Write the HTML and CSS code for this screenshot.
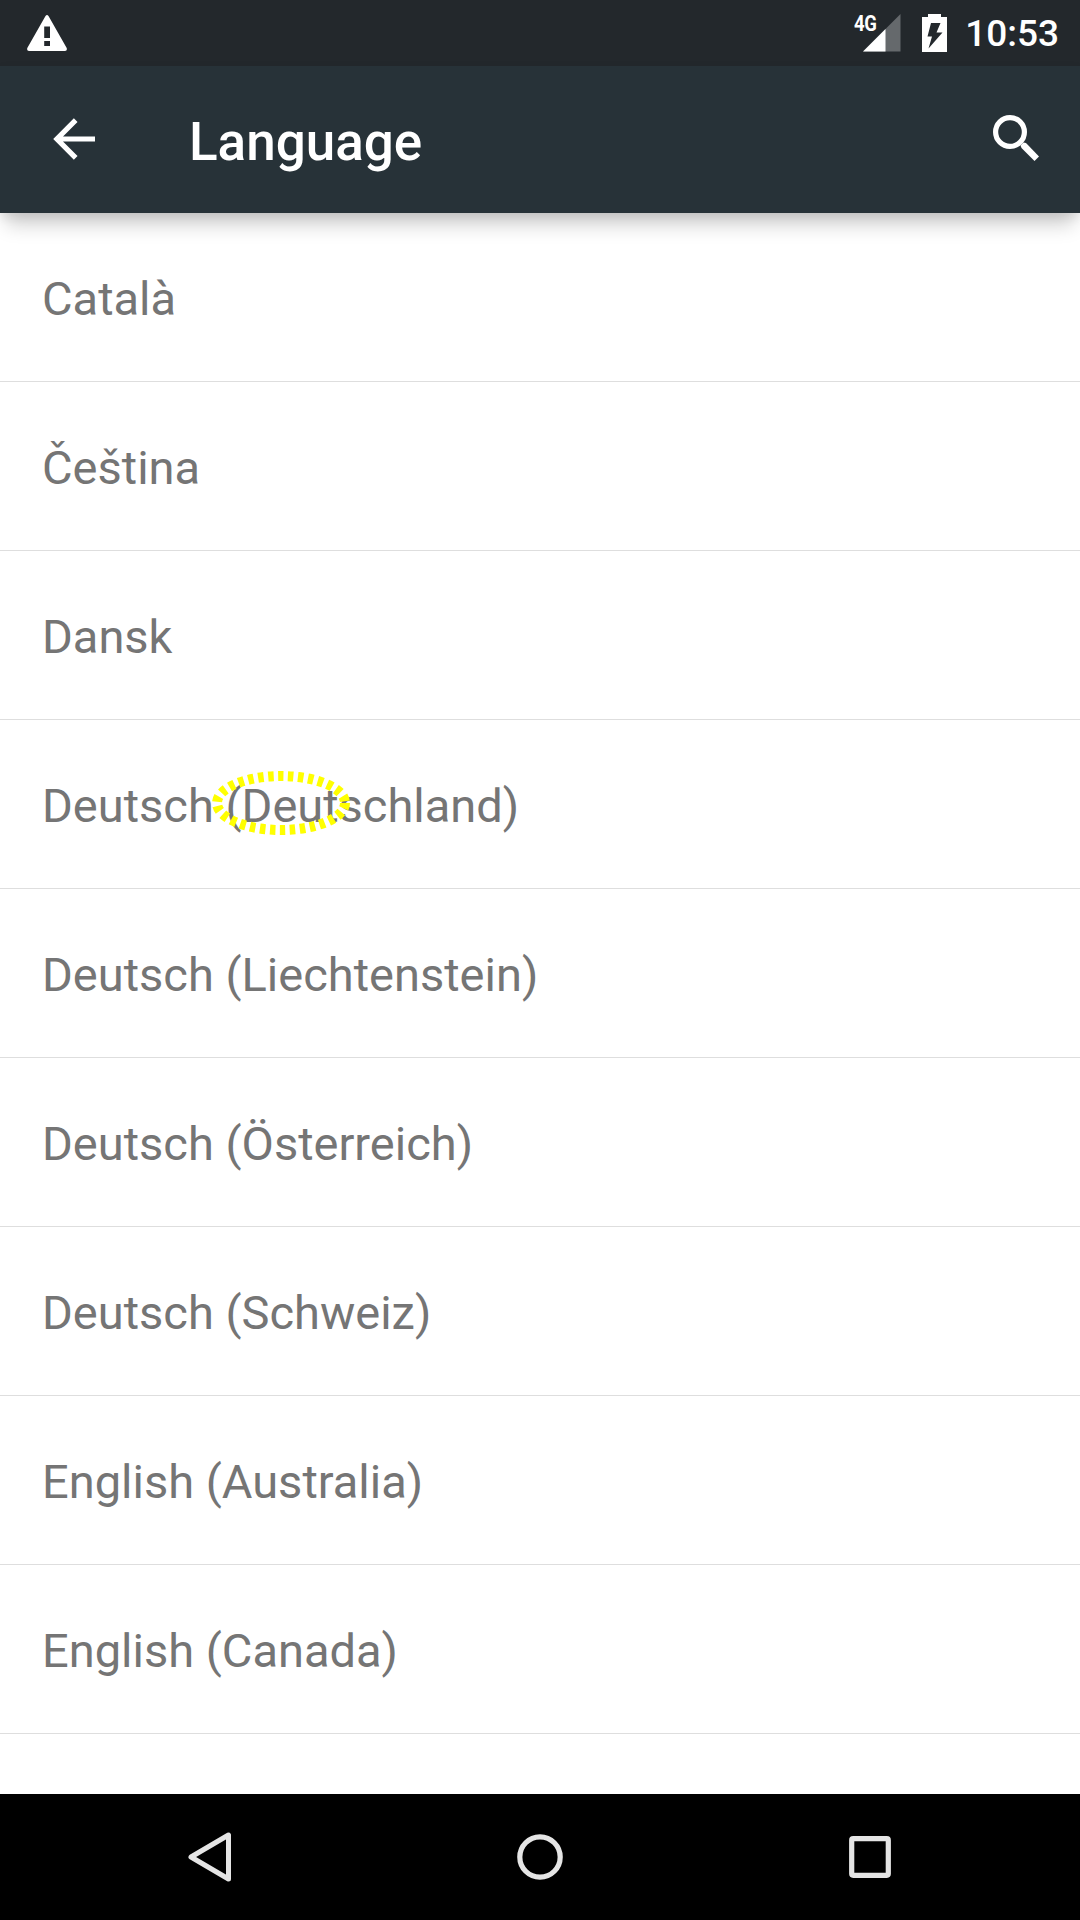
FILE: index.html
```html
<!DOCTYPE html>
<html lang="en">
<head>
<meta charset="utf-8">
<title>Language</title>
<link rel="stylesheet" href="styles.css">
</head>
<body>
<div class="screen">
  <header class="status-bar">
    <svg class="warning-icon" width="40" height="36" viewBox="0 0 40 36">
      <path fill="#fff" fill-rule="evenodd" d="M18.500 1Q20 -1 21.500 1L39.700 33Q40.500 36 38 36H2Q-.5 36 .3 33ZM17.200 11.500V23H23V11.500ZM17.200 26V31H23V26Z"/>
    </svg>
    <div class="status-right">
      <div class="signal">
        <span class="network">4G</span>
        <svg width="38" height="38" viewBox="0 0 38 38">
          <path fill="#65696c" d="M37.500 0V37.500H0Z"/>
          <path fill="#fff" d="M22.500 15V37.500H0Z"/>
        </svg>
      </div>
      <svg class="battery" width="25" height="38" viewBox="0 0 25 38">
        <path fill="#fff" fill-rule="evenodd" d="M6 0H19V3H25V38H0V3H6ZM9 9L5.500 22.500H10L6.500 34.500L20.500 18.500H14.500L18.500 9Z"/>
      </svg>
      <span class="clock">10:53</span>
    </div>
  </header>
  <div class="app-bar">
    <svg class="back" width="42" height="42" viewBox="0 0 42 42">
      <path fill="none" stroke="#fff" stroke-width="5.200" d="M42 21H4M22.700 2.200L3.900 21L22.700 39.800"/>
    </svg>
    <h1 class="title">Language</h1>
    <svg class="search" width="47" height="47" viewBox="0 0 47 47">
      <circle cx="17" cy="17" r="14.400" fill="none" stroke="#fff" stroke-width="5.200"/>
      <path fill="#fff" d="M27.500 30.500L30.500 27.500L33 28L46 41.500L41.500 46L28.500 33Z"/>
    </svg>
  </div>
  <ul class="languages">
    <li>Català</li>
    <li>Čeština</li>
    <li>Dansk</li>
    <li class="marked">Deutsch (Deutschland)
      <svg class="marker" width="142" height="66" viewBox="0 0 142 66">
        <ellipse cx="71" cy="33" rx="64" ry="27" fill="none" stroke="#ff0" stroke-width="10" stroke-dasharray="5.500 4.500"/>
      </svg>
    </li>
    <li>Deutsch (Liechtenstein)</li>
    <li>Deutsch (Österreich)</li>
    <li>Deutsch (Schweiz)</li>
    <li>English (Australia)</li>
    <li>English (Canada)</li>
  </ul>
  <nav class="nav-bar">
    <svg width="330" height="126" viewBox="0 0 330 126">
      <path fill="none" stroke="#e5e5e5" stroke-width="5" stroke-linejoin="round" d="M146 63L183.500 41V85Z"/>
    </svg>
    <svg width="330" height="126" viewBox="0 0 330 126">
      <circle cx="165" cy="63" r="20.200" fill="none" stroke="#e5e5e5" stroke-width="5.200"/>
    </svg>
    <svg width="330" height="126" viewBox="0 0 330 126">
      <rect x="146.700" y="44.700" width="36.600" height="36.600" rx="1.500" fill="none" stroke="#e5e5e5" stroke-width="5.200"/>
    </svg>
  </nav>
</div>
</body>
</html>
```
FILE: styles.css
```css
* {
  box-sizing: border-box;
}

body {
  margin: 0;
  font-family: Roboto, sans-serif;
  background: #fff;
}

svg {
  display: block;
}

.screen {
  display: flex;
  flex-direction: column;
  width: 1080px;
  height: 1920px;
  overflow: hidden;
}

.status-bar {
  display: flex;
  justify-content: space-between;
  height: 66px;
  padding: 14px 21px 0 27px;
  background: #23282c;
  color: #fff;
}

.warning-icon {
  margin-top: 1px;
}

.status-right {
  display: flex;
}

.signal {
  position: relative;
  width: 38px;
  margin-right: 21px;
}

.network {
  position: absolute;
  left: -9px;
  top: -2px;
  font-size: 22px;
  line-height: 24px;
  font-weight: 700;
  letter-spacing: -0.5px;
  transform: scaleX(0.84);
  transform-origin: left;
}

.battery {
  margin-right: 18px;
}

.clock {
  font-size: 37px;
  line-height: 40px;
  font-weight: 500;
}

.app-bar {
  position: relative;
  display: flex;
  height: 147px;
  padding: 49px 40px 0 53px;
  background: #273238;
  color: #fff;
  box-shadow: 0 18px 18px -6px rgba(0, 0, 0, 0.18), 0 4px 10px rgba(0, 0, 0, 0.09);
}

.back {
  margin-top: 3px;
}

.title {
  flex: 1;
  margin: -4px 0 0 94px;
  font-size: 53px;
  line-height: 62px;
  font-weight: 500;
}

.languages {
  flex: 1;
  margin: 0;
  padding: 0;
  list-style: none;
}

.languages li {
  height: 169px;
  padding: 58px 42px 0;
  border-bottom: 1px solid #dedede;
  color: #757575;
  font-size: 47px;
  line-height: 56px;
}

.languages .marked {
  position: relative;
}

.marker {
  position: absolute;
  left: 210px;
  top: 50px;
}

.nav-bar {
  display: flex;
  justify-content: center;
  height: 126px;
  background: #000;
}
```
